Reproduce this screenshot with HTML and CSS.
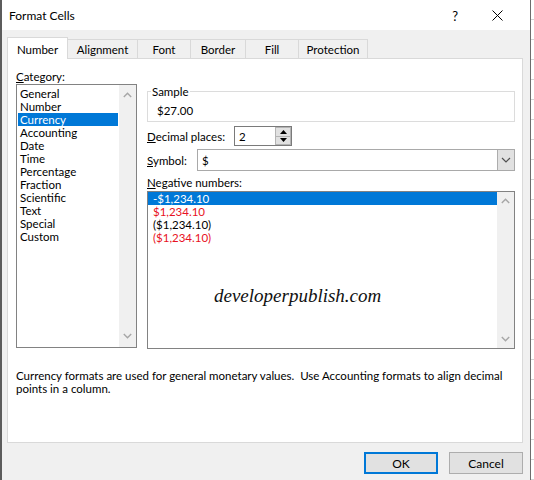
FILE: index.html
```html
<!DOCTYPE html>
<html>
<head>
<meta charset="utf-8">
<title>Format Cells</title>
<link rel="stylesheet" href="styles.css">
</head>
<body>
<div class="screen">
  <div class="window">
    <div class="titlebar">
      <span class="title">Format Cells</span>
      <span class="help">?</span>
      <span class="close"><svg width="11" height="11" viewBox="0 0 11 11"><path d="M0.5 0.5L10.5 10.5M10.5 0.5L0.5 10.5" stroke="#000" stroke-width="1" fill="none"/></svg></span>
    </div>
    <div class="tabs">
      <div class="tab active w-number">Number</div>
      <div class="tab w-align">Alignment</div>
      <div class="tab w-font">Font</div>
      <div class="tab w-border">Border</div>
      <div class="tab w-fill">Fill</div>
      <div class="tab w-prot">Protection</div>
    </div>
    <div class="panel">
      <div class="cols">
        <div class="left">
          <div class="label"><u>C</u>ategory:</div>
          <div class="listbox cat">
            <div class="items cat-items">
              <div class="item">General</div>
              <div class="item">Number</div>
              <div class="item sel">Currency</div>
              <div class="item">Accounting</div>
              <div class="item">Date</div>
              <div class="item">Time</div>
              <div class="item">Percentage</div>
              <div class="item">Fraction</div>
              <div class="item">Scientific</div>
              <div class="item">Text</div>
              <div class="item">Special</div>
              <div class="item">Custom</div>
            </div>
            <div class="scrollbar cat-scroll">
              <svg width="9" height="6" viewBox="0 0 9 6"><path d="M0.8 5L4.5 1.3L8.2 5" stroke="#a6a6a6" stroke-width="1.4" fill="none"/></svg>
              <svg width="9" height="6" viewBox="0 0 9 6"><path d="M0.8 1L4.5 4.7L8.2 1" stroke="#a6a6a6" stroke-width="1.4" fill="none"/></svg>
            </div>
          </div>
        </div>
        <div class="right">
          <fieldset class="sample">
            <legend>Sample</legend>
            <div class="sample-value">$27.00</div>
          </fieldset>
          <div class="row decimal-row">
            <span class="row-label dec-label"><u>D</u>ecimal places:</span>
            <div class="spin">
              <span class="spin-val">2</span>
              <div class="spin-btns">
                <div class="spin-btn"><svg width="7" height="4" viewBox="0 0 7 4"><path d="M0 4L3.5 0L7 4Z" fill="#000"/></svg></div>
                <div class="spin-btn"><svg width="7" height="4" viewBox="0 0 7 4"><path d="M0 0L3.5 4L7 0Z" fill="#000"/></svg></div>
              </div>
            </div>
          </div>
          <div class="row symbol-row">
            <span class="row-label sym-label"><u>S</u>ymbol:</span>
            <div class="combo">
              <span class="combo-val">$</span>
              <div class="drop"><svg width="10" height="6" viewBox="0 0 10 6"><path d="M1 1L5 5L9 1" stroke="#505050" stroke-width="1.2" fill="none"/></svg></div>
            </div>
          </div>
          <div class="label neg-label"><u>N</u>egative numbers:</div>
          <div class="listbox neg">
            <div class="items neg-items">
              <div class="item sel">-$1,234.10</div>
              <div class="item red">$1,234.10</div>
              <div class="item">($1,234.10)</div>
              <div class="item red">($1,234.10)</div>
            </div>
            <div class="scrollbar neg-scroll">
              <svg width="9" height="6" viewBox="0 0 9 6"><path d="M0.8 5L4.5 1.3L8.2 5" stroke="#a6a6a6" stroke-width="1.4" fill="none"/></svg>
              <svg width="9" height="6" viewBox="0 0 9 6"><path d="M0.8 1L4.5 4.7L8.2 1" stroke="#a6a6a6" stroke-width="1.4" fill="none"/></svg>
            </div>
          </div>
        </div>
      </div>
      <p class="desc"><span>Currency formats are used for general monetary values.&nbsp; Use Accounting formats to align decimal</span><br><span>points in a column.</span></p>
      <div class="watermark">developerpublish.com</div>
    </div>
    <div class="buttons">
      <button class="btn ok">OK</button>
      <button class="btn">Cancel</button>
    </div>
  </div>
  <div class="outside"></div>
</div>
</body>
</html>
```

FILE: styles.css
```css
* { box-sizing: border-box; }
html, body { margin: 0; padding: 0; }
body {
  width: 534px;
  height: 480px;
  overflow: hidden;
  background: #fff;
  font-family: Lato, "Liberation Sans", Arial, sans-serif;
  font-size: 11.5px;
  color: #000;
}
.screen { display: flex; height: 480px; }
.window {
  width: 530px;
  height: 480px;
  background: #f0f0f0;
  border-left: 2px solid #5c5c5c;
  display: flex;
  flex-direction: column;
}
.outside {
  flex: 1;
  border-left: 1px solid #6d6d6d;
  background: repeating-linear-gradient(to bottom, #ffffff 0 19px, #d4d4d4 19px 20px);
}
.titlebar {
  height: 30px;
  flex: none;
  background: #fff;
  display: flex;
  align-items: center;
  padding: 1px 0 0 7px;
}
.title { flex: 1; font-size: 12px; }
.help { font-size: 13px; margin-right: 34px; }
.close { display: flex; margin-right: 27px; }

.tabs {
  height: 21px;
  flex: none;
  margin-top: 7px;
  padding-left: 5px;
  display: flex;
  align-items: flex-end;
}
.tab {
  height: 19px;
  border: 1px solid #d9d9d9;
  border-bottom: none;
  margin-left: -1px;
  display: flex;
  align-items: center;
  justify-content: center;
  padding-top: 1px;
  background: #f0f0f0;
}
.tab:first-child { margin-left: 0; }
.tab.active {
  height: 22px;
  margin-bottom: -1px;
  background: #fff;
  position: relative;
  z-index: 1;
}
.w-number { width: 61px; }
.w-align { width: 71px; }
.w-font { width: 54px; }
.w-border { width: 56px; }
.w-fill { width: 54px; }
.w-prot { width: 70px; }

.panel {
  flex: none;
  margin-left: 5px;
  width: 516px;
  height: 385px;
  background: #fff;
  border: 1px solid #d9d9d9;
  padding: 10px 7px 0 8px;
  position: relative;
}
.cols {
  display: grid;
  grid-template-columns: 121px 368px;
  column-gap: 10px;
  align-items: start;
}
.label { line-height: 13px; padding-top: 1px; }
.left .label { margin-bottom: 1px; }

.listbox {
  border: 1px solid #828282;
  background: #fff;
  display: flex;
}
.cat { height: 264px; }
.neg { height: 158px; margin-top: 2px; }
.items { flex: 1; }
.cat-items { padding: 2px 1px 0 1px; }
.item { line-height: 13px; height: 13px; white-space: nowrap; padding-left: 2px; }
.neg-items .item { padding-left: 5px; }
.item.sel { background: #0078d7; color: #fff; }
.item.red { color: #e81123; }
.scrollbar {
  width: 17px;
  flex: none;
  background: #f0f0f0;
  display: flex;
  flex-direction: column;
  align-items: center;
  justify-content: space-between;
}
.scrollbar svg { display: block; }
.cat-scroll { padding: 7px 0 8px; }
.neg-scroll { padding: 6px 0 6px; }

.sample {
  margin: 15px 0 0;
  padding: 0 0 4px 9px;
  border: 1px solid #dcdcdc;
  min-width: 0;
}
.sample legend {
  padding: 1px 1px 0;
  margin-left: -6px;
  line-height: 13px;
}
.sample-value { line-height: 13px; margin-top: 5px; padding-top: 1px; height: 14px; }

.row { display: flex; align-items: center; }
.decimal-row { margin-top: 4px; }
.symbol-row { margin-top: 3px; }
.row-label { line-height: 13px; padding-top: 1px; }
.dec-label { width: 87px; }
.sym-label { width: 50px; }
.spin {
  width: 58px;
  height: 20px;
  border: 1px solid #7a7a7a;
  display: flex;
  align-items: center;
  padding-left: 4px;
  background: #fff;
}
.spin-val { flex: 1; padding-top: 1px; }
.spin-btns {
  width: 16px;
  height: 18px;
  display: flex;
  flex-direction: column;
}
.spin-btn {
  flex: 1;
  background: #e1e1e1;
  border: 1px solid #b4b4b4;
  display: flex;
  align-items: center;
  justify-content: center;
}
.spin-btn + .spin-btn { border-top: none; }
.spin-btn svg { display: block; }
.combo {
  width: 318px;
  height: 22px;
  border: 1px solid #a9a9a9;
  display: flex;
  align-items: center;
  padding-left: 4px;
  background: #fff;
}
.combo-val { flex: 1; padding-top: 1px; }
.drop {
  width: 17px;
  height: 20px;
  background: #e1e1e1;
  border-left: 1px solid #adadad;
  display: flex;
  align-items: center;
  justify-content: center;
}
.drop svg { display: block; }
.neg-label { margin-top: 4px; }

.desc {
  margin: 19px 0 0;
  line-height: 13px;
  padding-top: 1px;
}
.desc span { white-space: nowrap; }

.watermark {
  position: absolute;
  left: 206px;
  top: 226px;
  font-family: "Liberation Serif", "Times New Roman", serif;
  font-style: italic;
  font-size: 19px;
  color: #111;
}

.buttons {
  flex: none;
  display: flex;
  justify-content: flex-end;
  gap: 11px;
  padding-right: 7px;
  margin-top: 9px;
}
.btn {
  width: 74px;
  height: 22px;
  padding: 1px 0 0;
  background: #e1e1e1;
  border: 1px solid #adadad;
  font-family: Lato, "Liberation Sans", Arial, sans-serif;
  font-size: 12px;
  color: #000;
}
.btn.ok { border: 2px solid #0078d7; }
```
